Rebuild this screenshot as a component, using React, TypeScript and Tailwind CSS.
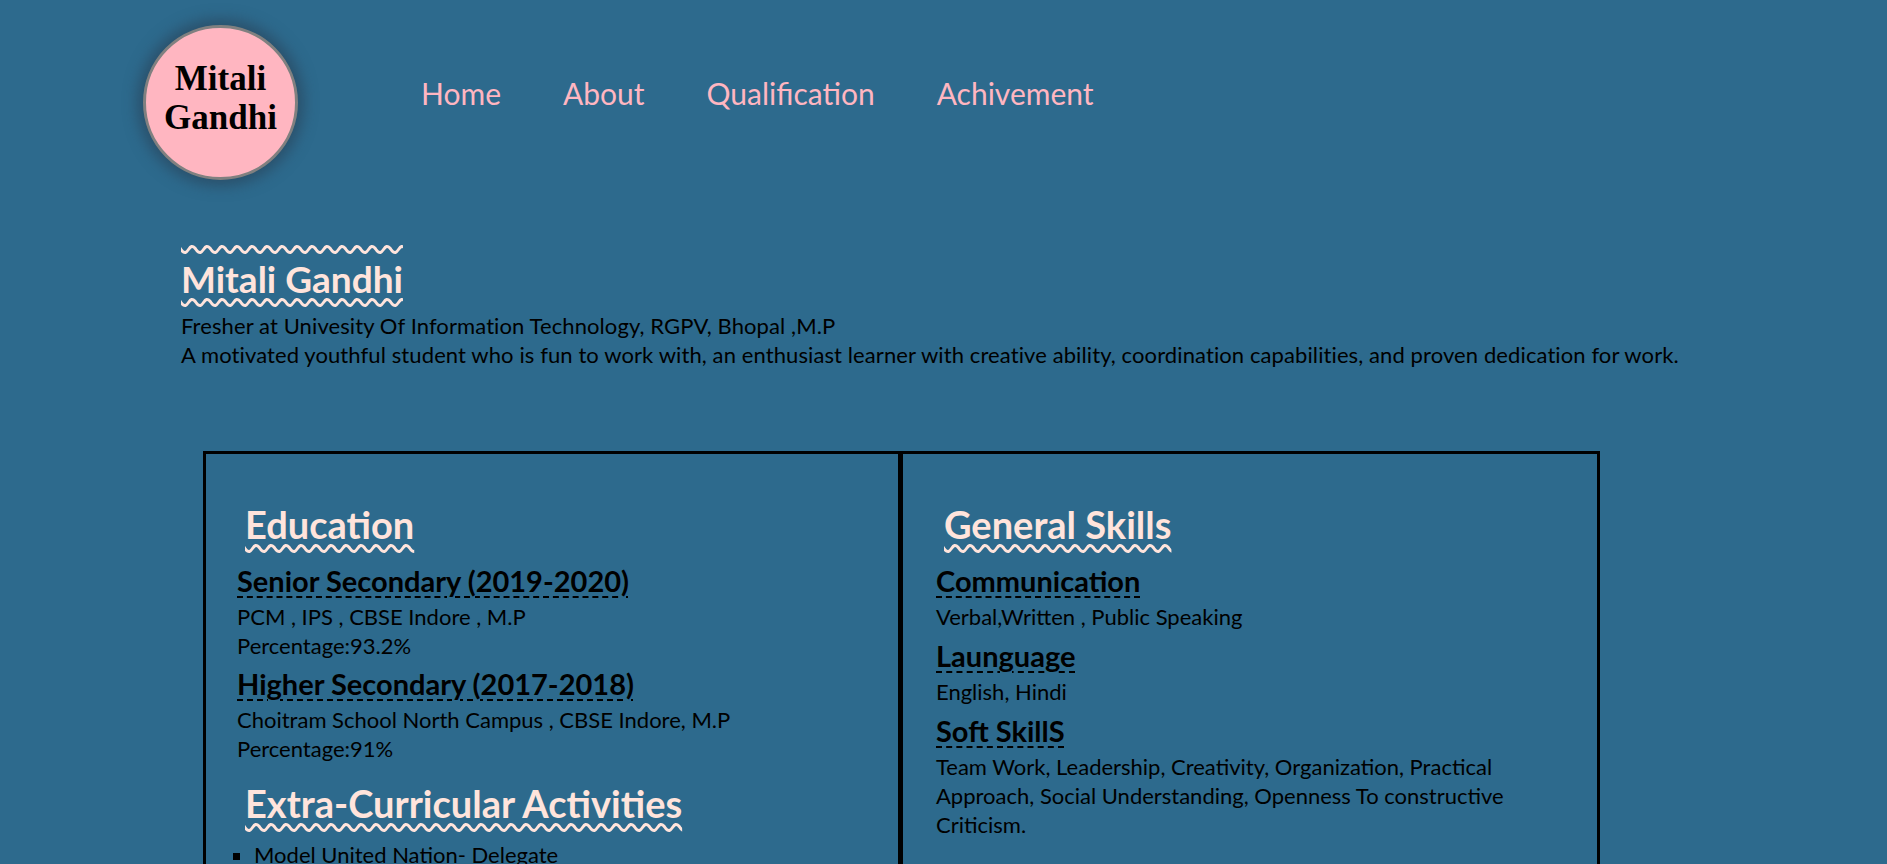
import React from 'react';

const body = "font-['Lato','Open_Sans',sans-serif]";

const SectionTitle: React.FC<{ children: React.ReactNode }> = ({ children }) => (
  <h2 className="pl-2 text-[38px] font-bold leading-[44px] text-[#ffe4dc] underline decoration-wavy decoration-[3px] underline-offset-[5px]">
    {children}
  </h2>
);

const SubTitle: React.FC<{ children: React.ReactNode }> = ({ children }) => (
  <h3 className="text-[29px] font-bold leading-[34px] text-black underline decoration-dashed decoration-2 underline-offset-[4px]">
    {children}
  </h3>
);

const Text: React.FC<{ children: React.ReactNode }> = ({ children }) => (
  <p className="mt-[4px] text-[22px] leading-[29px] text-black">{children}</p>
);

export default function App() {
  const links = ['Home', 'About', 'Qualification', 'Achivement'];

  return (
    <div className={`min-h-screen w-full bg-[#2d6a8d] ${body}`}>
      {/* Header */}
      <header className="flex items-start pl-[143px] pt-[25px]">
        <div className="flex h-[155px] w-[155px] shrink-0 items-center justify-center rounded-full border-[3px] border-[#808080] bg-[#ffb6c1] pb-[10px] shadow-[0_0_14px_6px_rgba(40,60,80,0.55)]">
          <span className="text-center font-['Liberation_Serif',serif] text-[35px] font-bold leading-[39px] text-black">
            Mitali
            <br />
            Gandhi
          </span>
        </div>
        <nav className="ml-[123px] mt-[50px] flex gap-[62px]">
          {links.map((l) => (
            <a key={l} href="#" className="text-[30px] leading-[36px] text-[#ffb6c1]">
              {l}
            </a>
          ))}
        </nav>
      </header>

      {/* Intro */}
      <section className="pl-[181px] pt-[77px]">
        <h1 className="inline-block text-[37px] font-bold leading-[44px] text-[#ffe4dc] [text-decoration-line:underline_overline] decoration-wavy decoration-[3px] underline-offset-[5px]">
          Mitali Gandhi
        </h1>
        <p className="mt-[10px] text-[22px] leading-[29px] tracking-[0.1px] text-black">
          Fresher at Univesity Of Information Technology, RGPV, Bhopal ,M.P
          <br />
          A motivated youthful student who is fun to work with, an enthusiast learner with creative ability, coordination capabilities, and proven dedication for work.
        </p>
      </section>

      {/* Boxes */}
      <section className="ml-[203px] mt-[82px] flex w-[1397px]">
        <div className="w-[698px] border-[3px] border-black pl-[31px] pr-[30px] pt-[48px]">
          <SectionTitle>Education</SectionTitle>
          <div className="mt-[18px]">
            <SubTitle>Senior Secondary (2019-2020)</SubTitle>
            <Text>
              PCM , IPS , CBSE Indore , M.P
              <br />
              Percentage:93.2%
            </Text>
          </div>
          <div className="mt-[7px]">
            <SubTitle>Higher Secondary (2017-2018)</SubTitle>
            <Text>
              Choitram School North Campus , CBSE Indore, M.P
              <br />
              Percentage:91%
            </Text>
          </div>
          <div className="mt-[18px]">
            <SectionTitle>Extra-Curricular Activities</SectionTitle>
          </div>
          <ul className="mt-[15px] list-[square] pl-[17px] text-[22px] leading-[29px] text-black">
            <li>Model United Nation- Delegate</li>
          </ul>
        </div>
        <div className="w-[699px] border-[3px] border-l-2 border-black pl-[33px] pr-[33px] pt-[48px]">
          <SectionTitle>General Skills</SectionTitle>
          <div className="mt-[18px]">
            <SubTitle>Communication</SubTitle>
            <Text>Verbal,Written , Public Speaking</Text>
          </div>
          <div className="mt-[8px]">
            <SubTitle>Launguage</SubTitle>
            <Text>English, Hindi</Text>
          </div>
          <div className="mt-[8px]">
            <SubTitle>Soft SkillS</SubTitle>
            <Text>
              Team Work, Leadership, Creativity, Organization, Practical Approach, Social Understanding, Openness To constructive Criticism.
            </Text>
          </div>
          <div className="h-[60px]" />
        </div>
      </section>
    </div>
  );
}
